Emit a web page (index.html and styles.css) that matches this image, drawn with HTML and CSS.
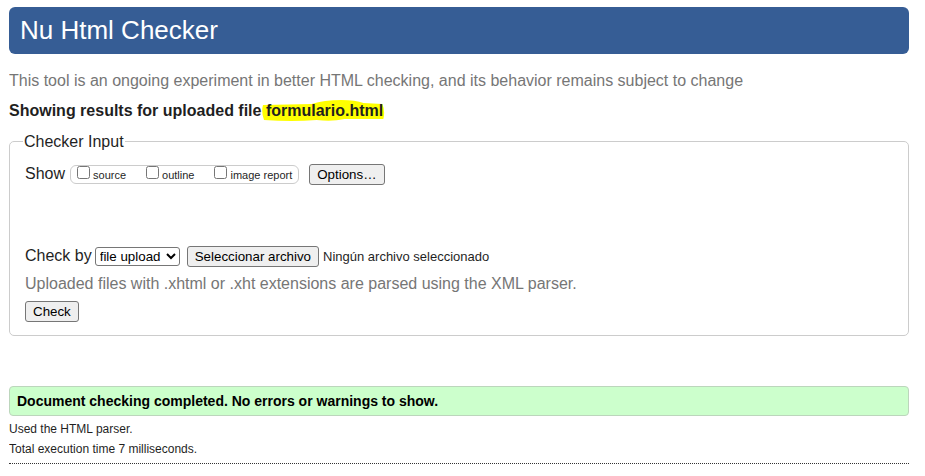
FILE: index.html
```html
<!DOCTYPE html>
<html lang="en">
<head>
<meta charset="utf-8">
<title>Nu Html Checker</title>
<link rel="stylesheet" href="styles.css">
</head>
<body>
<header class="banner"><h1>Nu Html Checker</h1></header>
<main>
<p class="note">This tool is an ongoing experiment in better HTML checking, and its behavior remains subject to change</p>
<h2 class="results-title">Showing results for uploaded file <span class="marked"><svg class="marker" viewBox="0 0 124 22" preserveAspectRatio="none" aria-hidden="true"><path d="M1 5 L50 4 Q62 0 80 0 Q94 0 102 3 L121 4 Q124 11 122 19 L83 19 Q70 22 55 20 Q30 22 2 20 Q-1 12 1 5Z" fill="#ff0"/></svg><span class="filename">formulario.html</span></span></h2>
<form>
<fieldset class="checker">
<legend>Checker Input</legend>
<div class="row show-row">
<span class="row-label">Show</span>
<div class="checks">
<label><input type="checkbox">source</label>
<label><input type="checkbox">outline</label>
<label><input type="checkbox">image report</label>
</div>
<button type="button" class="btn">Options…</button>
</div>
<div class="row source-row">
<label class="row-label" for="by">Check by</label>
<select id="by"><option>file upload</option></select>
<button type="button" class="btn pick" onclick="document.getElementById('file').click()">Seleccionar archivo</button>
<span class="chosen">Ningún archivo seleccionado</span>
<input id="file" type="file" hidden>
</div>
<p class="hint">Uploaded files with .xhtml or .xht extensions are parsed using the XML parser.</p>
<button type="button" class="btn">Check</button>
</fieldset>
</form>
<p class="success">Document checking completed. No errors or warnings to show.</p>
<div class="details">
<p>Used the HTML parser.</p>
<p>Total execution time 7 milliseconds.</p>
</div>
</main>
</body>
</html>
```
FILE: styles.css
```css
* { box-sizing: border-box; }
body {
  margin: 7px 16px 0 9px;
  background: #fff;
  color: #1f1f1f;
  font: 16px/20px "Liberation Sans", Arial, sans-serif;
}
h1, h2, p { margin: 0; }
.banner {
  padding: 8px 11px 9px;
  border-radius: 6px;
  background: #365d95;
  color: #fff;
}
h1 { font-size: 26px; font-weight: 400; line-height: 30px; }
.note { margin-top: 17px; color: #767676; }
.results-title { margin-top: 10px; font-size: 16px; line-height: 20px; }
.marked { position: relative; }
.marker {
  position: absolute;
  top: -2px;
  left: -4px;
  width: calc(100% + 6px);
  height: 22px;
}
.filename { position: relative; }
.checker {
  margin: 9px 0 0;
  padding: 12px 15px 13px;
  border: 1px solid #ccc;
  border-radius: 5px;
}
legend { margin-left: -2px; padding: 2px 1px 0; }
.row { display: flex; align-items: center; }
.row-label { padding-bottom: 2px; }
.show-row { height: 21px; }
.checks {
  display: flex;
  gap: 20px;
  height: 19px;
  margin: 0 10px 0 5px;
  padding: 0 6px;
  border: 1px solid #ccc;
  border-radius: 6px;
  font-size: 11px;
  line-height: 18px;
}
.checks label { display: flex; align-items: flex-start; }
.checks input { width: 13px; height: 13px; margin: 0 3px 0 0; }
.btn {
  height: 21px;
  padding: 0 7px;
  border: 1px solid #767676;
  border-radius: 3px;
  background: #efefef;
  color: #000;
  font-family: "Liberation Sans", Arial, sans-serif;
}
.source-row { height: 21px; margin-top: 61px; }
select {
  width: 85px;
  height: 19px;
  margin: 0 7px 0 3px;
  border: 1px solid #767676;
  border-radius: 3px;
  background: #fff;
  color: #000;
  font-family: "Liberation Sans", Arial, sans-serif;
}
.pick { margin-right: 4px; }
.chosen { font-size: 13px; }
.hint { margin: 7px 0; color: #767676; }
.success {
  margin-top: 50px;
  padding: 4px 7px;
  border: 1px solid #bcd6bc;
  border-radius: 4px;
  background: #cfc;
  color: #000;
  font-size: 14px;
  font-weight: 700;
}
.details {
  padding: 3px 0 4px;
  border-bottom: 1px dotted #333;
  font-size: 12px;
}
```
